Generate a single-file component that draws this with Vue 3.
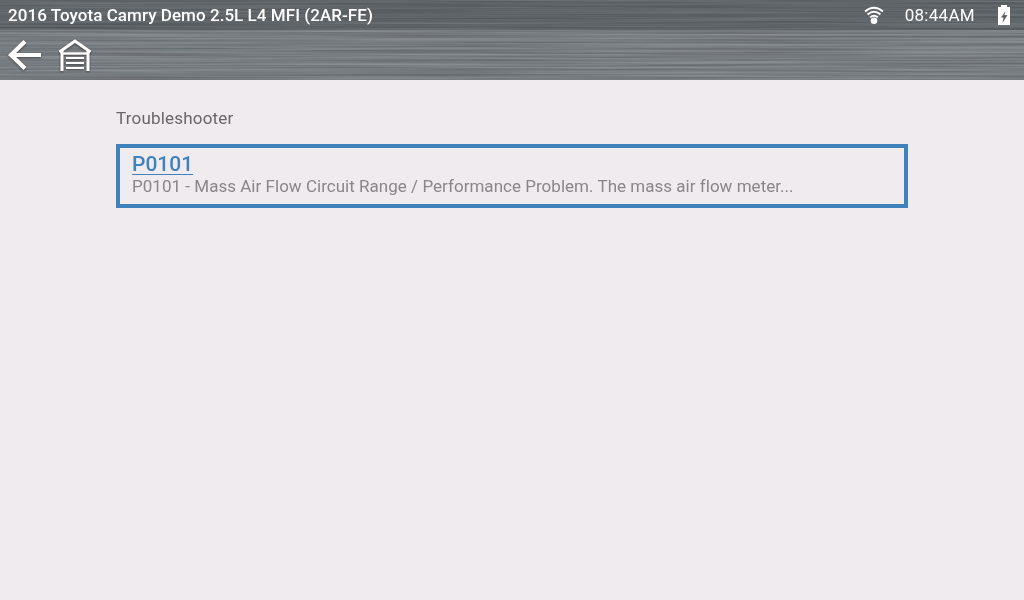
<script setup>
const title = '2016 Toyota Camry Demo 2.5L L4 MFI (2AR-FE)'
</script>

<template>
  <div class="screen">
    <header class="head">
      <svg class="metal" width="1024" height="80" viewBox="0 0 1024 80" aria-hidden="true">
        <defs>
          <filter id="brush" x="0" y="0" width="100%" height="100%" color-interpolation-filters="sRGB">
            <feTurbulence type="fractalNoise" baseFrequency="0.0035 0.55" numOctaves="3" seed="7" />
            <feColorMatrix type="matrix" values="1.7 0 0 0 -0.35 1.7 0 0 0 -0.35 1.7 0 0 0 -0.35 0 0 0 0 1" />
          </filter>
        </defs>
        <rect width="1024" height="30" fill="#5f6468" />
        <rect y="30" width="1024" height="50" fill="#777c80" />
        <rect class="grain" width="1024" height="80" filter="url(#brush)" />
      </svg>
      <div class="status">
        <span class="title">{{ title }}</span>
        <div class="status-right">
          <svg class="wifi" width="20" height="18" viewBox="0 0 20 18">
            <g fill="none" stroke="#fff" stroke-width="2">
              <path d="M1 5.500Q10 -2 19 5.500" />
              <path d="M3.600 8.500Q10 3 16.400 8.500" />
              <path d="M6.200 11.300Q10 8.200 13.800 11.300" />
            </g>
            <circle cx="10" cy="14.700" r="3.300" fill="#fff" />
          </svg>
          <span class="time">08:44AM</span>
          <svg class="batt" width="12" height="20" viewBox="0 0 12 20">
            <path fill="#fff" fill-rule="evenodd" d="M3 0h6v2h3v18H0V2h3zM7.500 6L3 12.500h2.500L4.500 18l5-8H6.500z" />
          </svg>
        </div>
      </div>
      <div class="tools">
        <svg class="glyph" width="36" height="34" viewBox="0 0 36 34">
          <path d="M18 3.500L4 17 18 30.500M5 17h29" fill="none" stroke="#fff" stroke-width="4.200" stroke-linejoin="miter" />
        </svg>
        <svg class="glyph" width="34" height="34" viewBox="0 0 34 34">
          <path d="M1.500 14L17 3 32.500 14" fill="none" stroke="#fff" stroke-width="3" />
          <path d="M2.500 13h3v20h-3zM28.500 13h3v20h-3z" fill="#fff" />
          <path d="M5 15.500h24" stroke="#fff" stroke-width="2.400" fill="none" />
          <path d="M8 20h18M8 25h18M8 30h18" stroke="#fff" stroke-width="2.200" fill="none" />
        </svg>
      </div>
    </header>
    <main class="body">
      <h1 class="crumb">Troubleshooter</h1>
      <div class="card">
        <a class="code">P0101</a>
        <p class="desc">P0101 - Mass Air Flow Circuit Range / Performance Problem. The mass air flow meter...</p>
      </div>
    </main>
  </div>
</template>

<style scoped>
.screen {
  width: 1024px;
  height: 600px;
  display: flex;
  flex-direction: column;
  background: #efebee;
  font-family: Roboto, "Liberation Sans", sans-serif;
  overflow: hidden;
}
.head {
  position: relative;
  height: 80px;
  flex: none;
  display: flex;
  flex-direction: column;
}
.metal {
  position: absolute;
  inset: 0;
  display: block;
}
.grain {
  opacity: .14;
  mix-blend-mode: overlay;
}
.status {
  position: relative;
  height: 30px;
  flex: none;
  display: flex;
  align-items: center;
  justify-content: space-between;
  padding: 0 14px 0 8px;
}
.title {
  color: #fff;
  font-size: 17px;
  font-weight: 500;
  letter-spacing: .05px;
}
.status-right {
  display: flex;
  align-items: center;
}
.wifi { margin-right: 21px; }
.time {
  color: #fff;
  font-size: 17px;
  letter-spacing: .3px;
  margin-right: 23px;
}
.tools {
  position: relative;
  height: 50px;
  flex: none;
  display: flex;
  align-items: center;
  padding: 0 0 0 7px;
  gap: 15px;
}
.glyph { filter: drop-shadow(0 1px 1px rgba(0,0,0,.45)); }
.body {
  flex: 1;
  padding: 27px 116px 0;
}
.crumb {
  margin: 0 0 15px;
  font-size: 17px;
  line-height: 22px;
  font-weight: 400;
  color: #6a6668;
  letter-spacing: .2px;
}
.card {
  height: 64px;
  box-sizing: border-box;
  border: 4px solid #3f82bc;
  padding: 4px 12px 0;
  display: flex;
  flex-direction: column;
  align-items: flex-start;
}
.code {
  font-size: 21px;
  line-height: 24px;
  font-weight: 500;
  color: #3f82bc;
  text-decoration: underline;
  text-decoration-thickness: 1px;
  text-underline-offset: 3px;
}
.desc {
  margin: 0;
  font-size: 17px;
  line-height: 21px;
  color: #8a8689;
  letter-spacing: .025px;
}
</style>
